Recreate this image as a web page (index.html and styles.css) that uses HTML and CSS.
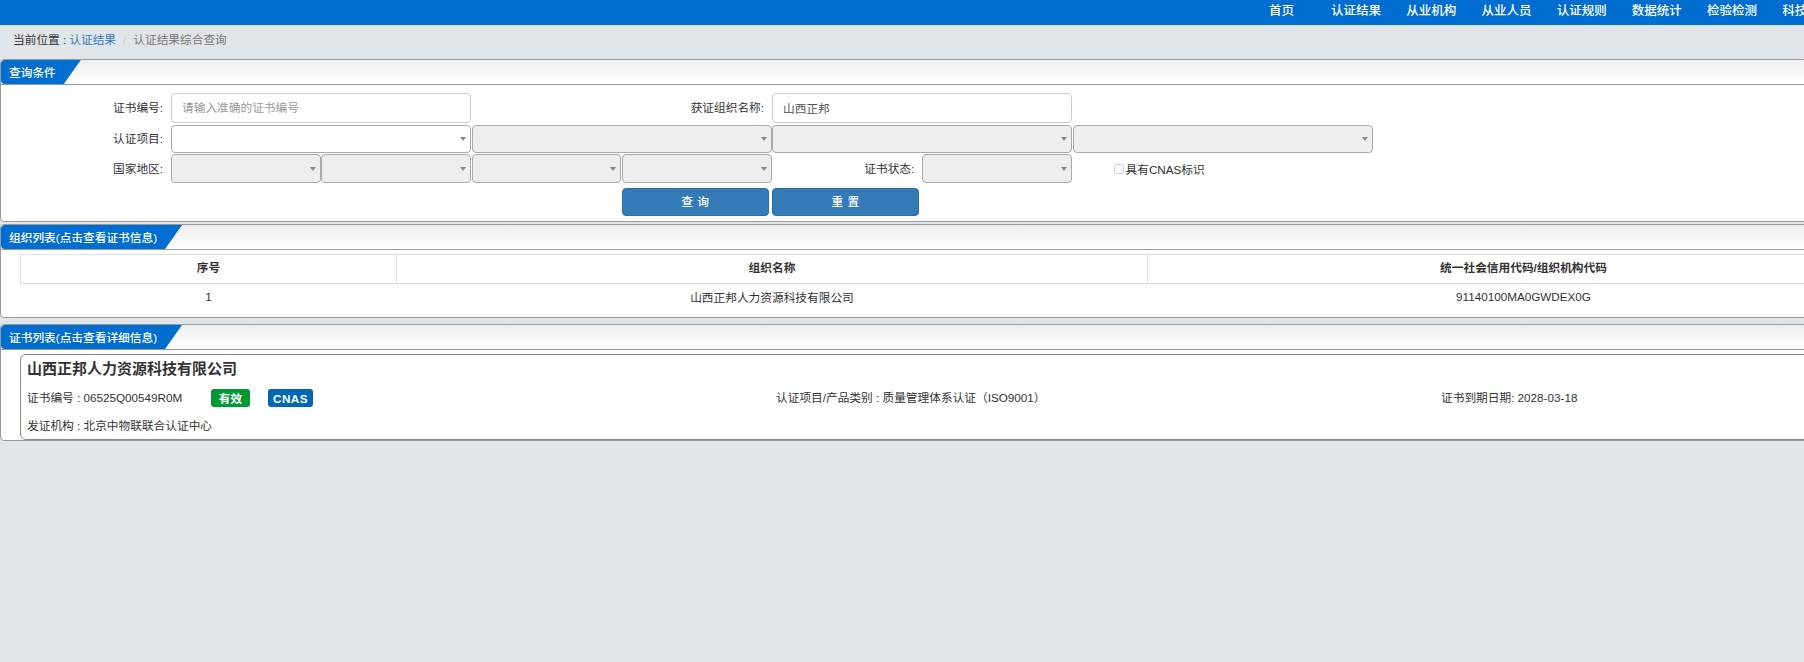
FILE: index.html
```html
<!DOCTYPE html>
<html lang="zh-CN">
<head>
<meta charset="utf-8">
<title>认证结果综合查询</title>
<link rel="stylesheet" href="styles.css">
</head>
<body>
<div class="page">
  <nav class="topnav">
    <a class="nav-item nav-home">首页</a>
    <a class="nav-item">认证结果</a>
    <a class="nav-item">从业机构</a>
    <a class="nav-item">从业人员</a>
    <a class="nav-item">认证规则</a>
    <a class="nav-item">数据统计</a>
    <a class="nav-item">检验检测</a>
    <a class="nav-item">科技</a>
  </nav>
  <div class="breadcrumb">
    <span>当前位置 :</span>
    <a class="crumb-link">认证结果</a>
    <span class="crumb-sep">/</span>
    <span class="crumb-current">认证结果综合查询</span>
  </div>

  <section class="panel panel-query">
    <header class="panel-head"><span class="panel-tab">查询条件</span></header>
    <form class="query-form">
      <div class="form-row row-inputs">
        <label class="field-label">证书编号:</label>
        <input class="text-input span-2" placeholder="请输入准确的证书编号">
        <label class="field-label span-2">获证组织名称:</label>
        <input class="text-input span-2" value="山西正邦">
      </div>
      <div class="form-row row-select-wide">
        <label class="field-label">认证项目:</label>
        <div class="select span-2 select-on"></div>
        <div class="select span-2"></div>
        <div class="select span-2"></div>
        <div class="select span-2"></div>
      </div>
      <div class="form-row row-select-narrow">
        <label class="field-label">国家地区:</label>
        <div class="select"></div>
        <div class="select"></div>
        <div class="select"></div>
        <div class="select"></div>
        <label class="field-label">证书状态:</label>
        <div class="select"></div>
        <label class="check-label"><input type="checkbox" class="check" disabled>具有CNAS标识</label>
      </div>
      <div class="form-row row-buttons">
        <button type="button" class="btn btn-first">查 询</button>
        <button type="button" class="btn">重 置</button>
      </div>
    </form>
  </section>

  <section class="panel panel-org">
    <header class="panel-head"><span class="panel-tab">组织列表(点击查看证书信息)</span></header>
    <div class="panel-body">
      <table class="org-table">
        <thead>
          <tr><th class="col-index">序号</th><th class="col-name">组织名称</th><th>统一社会信用代码/组织机构代码</th></tr>
        </thead>
        <tbody>
          <tr><td>1</td><td>山西正邦人力资源科技有限公司</td><td>91140100MA0GWDEX0G</td></tr>
        </tbody>
      </table>
    </div>
  </section>

  <section class="panel panel-cert">
    <header class="panel-head"><span class="panel-tab">证书列表(点击查看详细信息)</span></header>
    <div class="panel-body">
      <article class="cert-card">
        <h3 class="cert-title">山西正邦人力资源科技有限公司</h3>
        <div class="cert-row">
          <div class="cert-cell">
            <span class="cert-no cert-text">证书编号 : 06525Q00549R0M</span>
            <span class="badge badge-green">有效</span>
            <span class="badge badge-blue">CNAS</span>
          </div>
          <div class="cert-text">认证项目/产品类别 : 质量管理体系认证（ISO9001）</div>
          <div class="cert-text">证书到期日期: 2028-03-18</div>
        </div>
        <div class="cert-issuer">发证机构 : 北京中物联联合认证中心</div>
      </article>
    </div>
  </section>
</div>
</body>
</html>
```
FILE: styles.css
```css
* { box-sizing: border-box; }
html, body { margin: 0; padding: 0; height: 100%; overflow: hidden; background: #e0e5e9; }
body {
  font-family: "Liberation Sans", "Noto Sans CJK SC", sans-serif;
  font-size: 11.7px;
  color: #333;
}
.page { width: 1915px; }

.topnav {
  height: 25px;
  background: #006dd0;
  display: flex;
  padding-left: 1269px;
  font-size: 12.5px;
  line-height: 23px;
  color: #fff;
  font-weight: 500;
}
.nav-item { margin-right: 25.2px; white-space: nowrap; }
.nav-home { margin-right: 37px; }

.breadcrumb {
  height: 34px;
  padding-left: 13px;
  line-height: 30px;
  display: flex;
}
.crumb-link { color: #337ab7; margin-left: 3px; }
.crumb-sep { color: #ccc; margin: 0 7px; }
.crumb-current { color: #777; }

.panel {
  background: #fff;
  border: 1px solid #999;
  border-radius: 4px;
  overflow: hidden;
}
.panel-query { height: 163px; }
.panel-org { height: 94px; margin-top: 2px; }
.panel-cert { height: 117px; margin-top: 6px; }

.panel-head {
  height: 25px;
  background: linear-gradient(#eee, #fff);
  border-bottom: 1px solid #999;
  display: flex;
}
.panel-tab {
  height: 24px;
  line-height: 25px;
  padding: 0 25px 0 8px;
  background: #006dd0;
  color: #fff;
  font-weight: 500;
  border-radius: 4px 0 0 4px;
  clip-path: polygon(0 0, 100% 0, calc(100% - 17px) 100%, 0 100%);
  white-space: nowrap;
}

.query-form { padding-top: 8px; }
.form-row {
  display: grid;
  grid-template-columns: 170px repeat(8, 150.25px);
  align-items: stretch;
}
.row-inputs { height: 28px; }
.row-select-wide { height: 23px; margin-top: 4px; }
.row-select-narrow { height: 24px; margin-top: 6px; }
.row-buttons { height: 28px; margin-top: 10px; }
.span-2 { grid-column: span 2; }

.field-label {
  text-align: right;
  padding-right: 8px;
  line-height: 30px;
  white-space: nowrap;
}
.row-select-wide .field-label { line-height: 28px; }
.row-select-narrow .field-label { line-height: 29px; }

.text-input {
  border: 1px solid #ccc;
  border-radius: 4px;
  padding: 0 10px 2px;
  margin-right: .5px;
  font: inherit;
  color: #555;
  background: #fff;
  outline: none;
}
.text-input::placeholder { color: #999; opacity: 1; }

.select {
  position: relative;
  border: 1px solid #aaa;
  border-radius: 4px;
  margin-right: .5px;
  background: #eee;
}
.select-on { background: #fff; }
.select::after {
  content: "";
  position: absolute;
  right: 4px;
  top: 50%;
  margin-top: -2px;
  border-left: 3px solid transparent;
  border-right: 3px solid transparent;
  border-top: 4px solid #888;
}

.check-label {
  display: flex;
  align-items: center;
  grid-column: span 2;
  padding-left: 41px;
  white-space: nowrap;
}
.check {
  width: 10px;
  height: 10px;
  margin: 0 2px 0 0;
}

.btn {
  border: 1px solid #2e6da4;
  border-radius: 4px;
  background: #337ab7;
  color: #fff;
  font: inherit;
  font-weight: 500;
  letter-spacing: .5px;
  margin-right: 3px;
  padding: 0 0 3px;
}
.btn-first { grid-column: 5; }

.panel-body { padding: 4px 0 0 19px; }
.org-table {
  width: 1880px;
  border-collapse: collapse;
  table-layout: fixed;
}
.org-table th {
  height: 29px;
  padding: 0 0 5px;
  border: 1px solid #ddd;
  font-weight: bold;
  text-align: center;
}
.org-table td {
  height: 33px;
  padding: 0 0 7px;
  text-align: center;
}
.col-index { width: 376px; }
.col-name { width: 751px; }

.cert-card {
  height: 86px;
  border: 1px solid #888;
  border-radius: 6px;
  padding: 0 0 0 6px;
}
.cert-title {
  margin: 0;
  font-size: 15px;
  font-weight: bold;
  line-height: 28px;
}
.cert-row {
  display: grid;
  grid-template-columns: 749px 665px 1fr;
  align-items: center;
  height: 18px;
  margin-top: 5px;
}
.cert-text { padding-bottom: 2px; }
.cert-cell { display: flex; align-items: center; }
.cert-no { width: 184px; }
.badge {
  height: 18px;
  line-height: 19px;
  border-radius: 3px;
  color: #fff;
  font-weight: bold;
  text-align: center;
}
.badge-green { width: 39px; background: #009933; }
.badge-blue { width: 45px; margin-left: 18px; background: #0067b5; letter-spacing: .5px; }
.cert-issuer { margin-top: 12px; line-height: 16px; }
```
